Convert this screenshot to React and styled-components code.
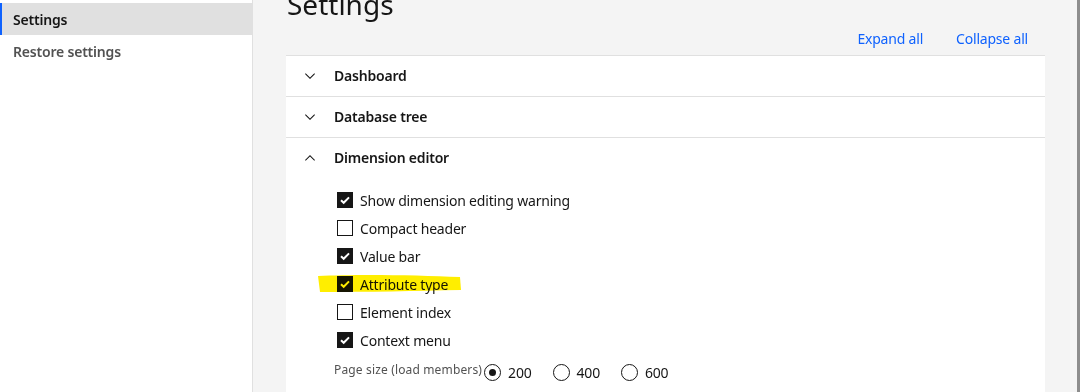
import React from "react";
import styled, { createGlobalStyle } from "styled-components";

const GlobalStyle = createGlobalStyle`
  html, body {
    margin: 0;
    padding: 0;
    background: #fff;
  }
  body {
    font-family: "Noto Sans", "Liberation Sans", sans-serif;
    letter-spacing: -0.2px;
    color: #161616;
  }
`;

const Page = styled.div`
  display: flex;
  width: 1080px;
  height: 392px;
  overflow: hidden;
`;

const Sidebar = styled.nav`
  width: 252px;
  flex-shrink: 0;
  padding-top: 3px;
  background: #fff;
  border-right: 1px solid #e0e0e0;
`;

const NavItem = styled.div`
  height: 32px;
  display: flex;
  align-items: center;
  padding-left: 11px;
  font-size: 14px;
  font-weight: 600;
  border-left: 2px solid ${(p) => (p.$active ? "#0f62fe" : "transparent")};
  background: ${(p) => (p.$active ? "#e0e0e0" : "transparent")};
  color: ${(p) => (p.$active ? "#161616" : "#525252")};
`;

const Main = styled.main`
  flex: 1;
  background: #f4f4f4;
  padding: 0 32px 0 33px;
  display: flex;
  flex-direction: column;
  overflow: hidden;
`;

const Scrollbar = styled.div`
  width: 3px;
  flex-shrink: 0;
  background: #8d8d8d;
`;

const Title = styled.h1`
  margin: -14px 0 0 1px;
  font-size: 28px;
  font-weight: 400;
  line-height: 36px;
  letter-spacing: 0;
`;

const Toolbar = styled.div`
  display: flex;
  justify-content: flex-end;
  gap: 33px;
  padding-right: 17px;
  height: 33px;
  align-items: center;
`;

const LinkButton = styled.button`
  border: none;
  background: none;
  padding: 0;
  font: inherit;
  letter-spacing: inherit;
  font-size: 14px;
  color: #0f62fe;
  cursor: pointer;
`;

const Panel = styled.section`
  background: #fff;
  flex: 1;
`;

const Item = styled.div`
  border-top: 1px solid #e0e0e0;
`;

const Heading = styled.div`
  height: 40px;
  display: flex;
  align-items: center;
  padding-left: 16px;
  padding-bottom: 1px;
  box-sizing: border-box;
  gap: 16px;
  font-size: 14px;
  font-weight: 600;
`;

const Content = styled.div`
  padding: 8px 0 0 48px;
  position: relative;
`;

const CheckRow = styled.label`
  height: 28px;
  display: flex;
  align-items: center;
  gap: 7px;
  padding-left: 3px;
  font-size: 14px;
`;

const Box = styled.span`
  width: 16px;
  height: 16px;
  box-sizing: border-box;
  border: 1px solid #161616;
  background: ${(p) => (p.$checked ? "#161616" : "#fff")};
  display: flex;
  align-items: center;
  justify-content: center;
`;

const RadioRow = styled.div`
  display: flex;
  align-items: center;
  height: 36px;
`;

const RadioLabel = styled.span`
  font-size: 12px;
  letter-spacing: 0.15px;
  color: #525252;
  margin: 0 2px 6px 0;
`;

const Radio = styled.label`
  display: flex;
  align-items: center;
  gap: 7px;
  font-size: 14px;
  margin-right: 21px;
`;

const Circle = styled.span`
  width: 17px;
  height: 17px;
  box-sizing: border-box;
  border: 1px solid #161616;
  border-radius: 50%;
  display: flex;
  align-items: center;
  justify-content: center;
  &::after {
    content: "";
    width: 7px;
    height: 7px;
    border-radius: 50%;
    background: ${(p) => (p.$checked ? "#161616" : "transparent")};
  }
`;

const Marker = styled.svg`
  position: absolute;
  left: 31px;
  top: 96px;
  mix-blend-mode: multiply;
  pointer-events: none;
`;

const Chevron = ({ up }) => (
  <svg width="16" height="16" viewBox="0 0 16 16" fill="#161616">
    {up ? (
      <path d="M8 5L13 10 12.3 10.7 8 6.4 3.7 10.7 3 10z" />
    ) : (
      <path d="M8 11L3 6 3.7 5.3 8 9.6 12.3 5.3 13 6z" />
    )}
  </svg>
);

const Check = () => (
  <svg width="12" height="12" viewBox="0 0 12 12">
    <path d="M2 6.2L4.7 8.8 10 3.4" fill="none" stroke="#fff" strokeWidth="2" />
  </svg>
);

const options = [
  { label: "Show dimension editing warning", checked: true },
  { label: "Compact header", checked: false },
  { label: "Value bar", checked: true },
  { label: "Attribute type", checked: true },
  { label: "Element index", checked: false },
  { label: "Context menu", checked: true },
];

export default function App() {
  return (
    <>
      <GlobalStyle />
      <Page>
        <Sidebar>
          <NavItem $active>Settings</NavItem>
          <NavItem>Restore settings</NavItem>
        </Sidebar>
        <Main>
          <Title>Settings</Title>
          <Toolbar>
            <LinkButton>Expand all</LinkButton>
            <LinkButton>Collapse all</LinkButton>
          </Toolbar>
          <Panel>
            <Item>
              <Heading>
                <Chevron />
                Dashboard
              </Heading>
            </Item>
            <Item>
              <Heading>
                <Chevron />
                Database tree
              </Heading>
            </Item>
            <Item>
              <Heading>
                <Chevron up />
                Dimension editor
              </Heading>
              <Content>
                {options.map((o) => (
                  <CheckRow key={o.label}>
                    <Box $checked={o.checked}>{o.checked && <Check />}</Box>
                    {o.label}
                  </CheckRow>
                ))}
                <RadioRow>
                  <RadioLabel>Page size (load members)</RadioLabel>
                  <Radio>
                    <Circle $checked />
                    200
                  </Radio>
                  <Radio>
                    <Circle />
                    400
                  </Radio>
                  <Radio>
                    <Circle />
                    600
                  </Radio>
                </RadioRow>
                <Marker width="150" height="20" viewBox="0 0 150 20">
                  <path
                    d="M1 2 C40 0 100 1 143 3 L144 16 C100 17 50 18 3 18 Z"
                    fill="#ffee00"
                  />
                </Marker>
              </Content>
            </Item>
          </Panel>
        </Main>
        <Scrollbar />
      </Page>
    </>
  );
}
